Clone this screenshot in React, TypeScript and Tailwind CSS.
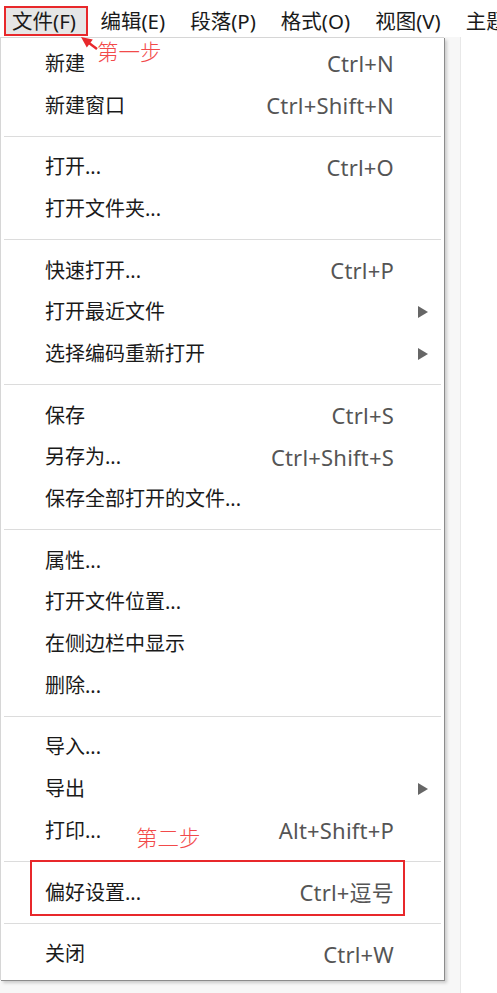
import React from 'react';

type Item = { label: string; shortcut?: string; submenu?: boolean };

const groups: Item[][] = [
  [
    { label: '新建', shortcut: 'Ctrl+N' },
    { label: '新建窗口', shortcut: 'Ctrl+Shift+N' },
  ],
  [
    { label: '打开...', shortcut: 'Ctrl+O' },
    { label: '打开文件夹...' },
  ],
  [
    { label: '快速打开...', shortcut: 'Ctrl+P' },
    { label: '打开最近文件', submenu: true },
    { label: '选择编码重新打开', submenu: true },
  ],
  [
    { label: '保存', shortcut: 'Ctrl+S' },
    { label: '另存为...', shortcut: 'Ctrl+Shift+S' },
    { label: '保存全部打开的文件...' },
  ],
  [
    { label: '属性...' },
    { label: '打开文件位置...' },
    { label: '在侧边栏中显示' },
    { label: '删除...' },
  ],
  [
    { label: '导入...' },
    { label: '导出', submenu: true },
    { label: '打印...', shortcut: 'Alt+Shift+P' },
  ],
  [{ label: '偏好设置...', shortcut: 'Ctrl+逗号' }],
  [{ label: '关闭', shortcut: 'Ctrl+W' }],
];

const topMenus = ['文件(F)', '编辑(E)', '段落(P)', '格式(O)', '视图(V)', '主题'];

const font = { fontFamily: '"Noto Sans", "Noto Sans CJK SC", sans-serif' };

function MenuRow({ item }: { item: Item }) {
  return (
    <div className="relative flex h-[41.7px] items-center pl-[44px] pr-[50px]">
      <span className="flex-1 text-[20px] text-[#1a1a1a]">{item.label}</span>
      {item.shortcut && (
        <span className="text-[22px] tracking-[0.2px] text-[#555]">{item.shortcut}</span>
      )}
      {item.submenu && (
        <svg className="absolute left-[417px]" width="10" height="12" viewBox="0 0 10 12">
          <path d="M0 0 L10 6 L0 12 Z" fill="#666" />
        </svg>
      )}
    </div>
  );
}

export default function App() {
  return (
    <div className="relative h-[993px] w-[497px] overflow-hidden bg-white" style={font}>
      {/* menu bar */}
      <div className="flex h-[37px] items-start bg-white pl-[4px] pt-[6px]">
        {topMenus.map((m, i) => (
          <div
            key={m}
            className={`flex h-[30px] items-center whitespace-nowrap text-[20.5px] text-[#1a1a1a] ${
              i === 0 ? 'border-2 border-[#e8282b] bg-[#e6e6e6] pl-[6px] pr-[10px]' : 'px-[12.5px]'
            }`}
          >
            {m}
          </div>
        ))}
      </div>

      {/* area below */}
      <div className="flex h-[956px]">
        <div className="h-full w-[461px] border-r border-[#e8e8e8] bg-[#f7f7f7]">
          <div className="relative w-[444px] border-l border-t border-[#d6d6d6] bg-white py-[5px] shadow-[1px_1px_0_#8c8c8c,3px_3px_3px_rgba(0,0,0,0.18)]">
            {groups.map((g, gi) => (
              <div key={gi}>
                {gi > 0 && <div className="mx-[3px] my-[9.5px] h-px bg-[#dcdcdc]" />}
                {g.map((item) => (
                  <MenuRow key={item.label} item={item} />
                ))}
              </div>
            ))}

            {/* annotation box for preferences */}
            <div className="absolute left-[29px] top-[822px] h-[56px] w-[375px] border-2 border-[#e8282b]" />
            <span className="absolute left-[135px] top-[789px] text-[21.5px] font-light leading-none text-[#f24a4a]">
              第二步
            </span>
          </div>
        </div>
        <div className="flex-1 bg-white" />
      </div>

      {/* step one annotation */}
      <svg className="absolute left-[78px] top-[34px]" width="24" height="20" viewBox="0 0 24 20">
        <path d="M19 15 L9 7.5" stroke="#e8282b" strokeWidth="2.4" fill="none" />
        <path d="M3 3 L14.8 5.6 L8.8 13.6 Z" fill="#e8282b" />
      </svg>
      <span className="absolute left-[97px] top-[41px] text-[21.5px] font-light leading-none text-[#f24a4a]">
        第一步
      </span>
    </div>
  );
}
